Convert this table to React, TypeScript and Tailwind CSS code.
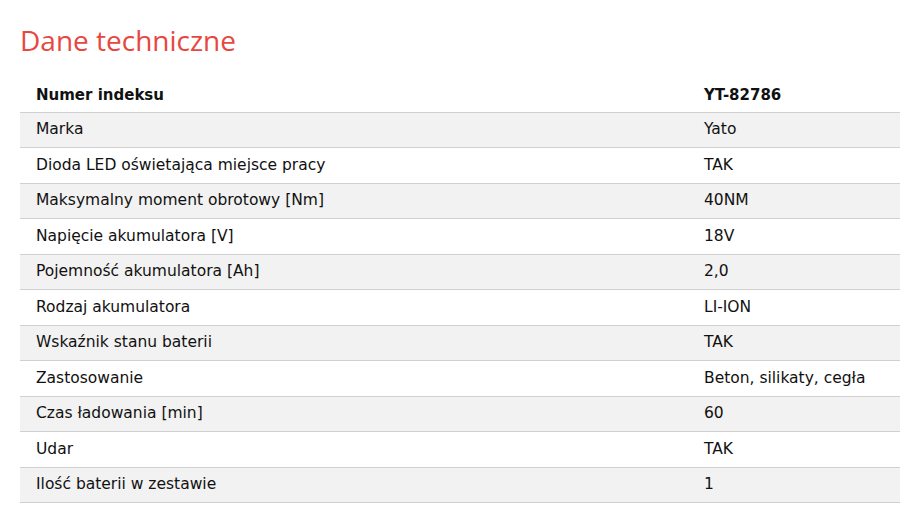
const rows: [string, string][] = [
  ["Marka", "Yato"],
  ["Dioda LED oświetająca miejsce pracy", "TAK"],
  ["Maksymalny moment obrotowy [Nm]", "40NM"],
  ["Napięcie akumulatora [V]", "18V"],
  ["Pojemność akumulatora [Ah]", "2,0"],
  ["Rodzaj akumulatora", "LI-ION"],
  ["Wskaźnik stanu baterii", "TAK"],
  ["Zastosowanie", "Beton, silikaty, cegła"],
  ["Czas ładowania [min]", "60"],
  ["Udar", "TAK"],
  ["Ilość baterii w zestawie", "1"],
];

export default function App() {
  return (
    <div className="min-h-[526px] w-[900px] bg-white pl-5 pt-[21px] font-['DejaVu_Sans',Verdana,sans-serif] text-[15.5px] text-[#111]">
      <h2 className="font-['Open_Sans',sans-serif] text-[28px] leading-[38px] text-[#e8473f]">
        Dane techniczne
      </h2>

      <div className="mt-[19px] w-[880px]">
        <div className="grid h-[34.5px] grid-cols-[684px_1fr] items-center border-b border-[#d0d0d0] text-[15px] font-bold">
          <span className="pl-4">Numer indeksu</span>
          <span>YT-82786</span>
        </div>
        {rows.map(([label, value], index) => (
          <div
            key={label}
            className={`grid h-[35.5px] grid-cols-[684px_1fr] items-center border-b border-[#d0d0d0] ${
              index % 2 === 0 ? "bg-[#f2f2f2]" : "bg-white"
            }`}
          >
            <span className="pl-4">{label}</span>
            <span>{value}</span>
          </div>
        ))}
      </div>
    </div>
  );
}
